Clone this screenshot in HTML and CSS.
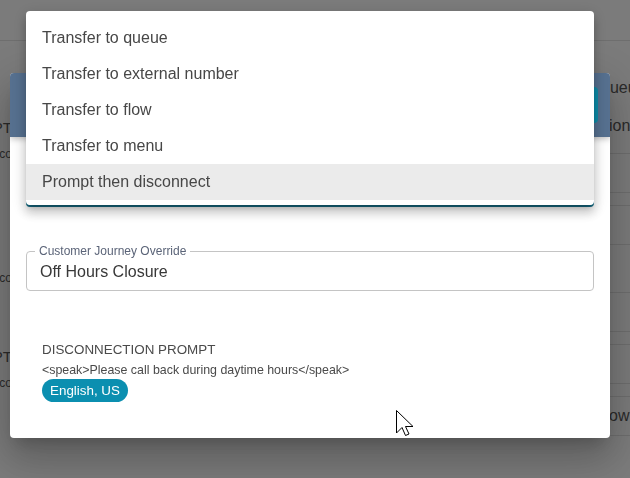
FILE: index.html
```html
<!DOCTYPE html>
<html>
<head>
	<meta charset="utf-8">
	<title>Disconnection settings</title>
	<link rel="stylesheet" href="styles.css">
</head>
<body>
	<div class="page">
		<div class="topbar"></div>
		<div class="content">
			<ul class="side">
				<li><div class="side-title">DISCONNECTION PROMPT</div><div class="side-sub">&lt;speak&gt;We are closed, please co</div></li>
				<li><div class="side-sub">Holiday closure in effect, co</div></li>
				<li><div class="side-title">DISCONNECTION PROMPT</div><div class="side-sub">&lt;speak&gt;Thanks for calling, co</div></li>
			</ul>
			<div class="main"></div>
			<ul class="table">
				<li class="row row-head"><div>queue</div><div>ition</div></li>
				<li class="row"></li>
				<li class="row row-gap"></li>
				<li class="row"></li>
				<li class="row row-wide"></li>
				<li class="row"></li>
				<li class="row row-gap"></li>
				<li class="row"></li>
				<li class="row row-gap"></li>
				<li class="row row-text">flow</li>
			</ul>
		</div>
	</div>

	<div class="backdrop"></div>

	<div class="dialog">
		<div class="dialog-head">
			<button class="head-action">Save</button>
		</div>
		<div class="dialog-body">
			<div class="select"></div>

			<fieldset class="field">
				<legend>Customer Journey Override</legend>
				<div class="field-value">Off Hours Closure</div>
			</fieldset>

			<div class="prompt">
				<div class="prompt-title">DISCONNECTION PROMPT</div>
				<div class="prompt-text">&lt;speak&gt;Please call back during daytime hours&lt;/speak&gt;</div>
				<span class="chip">English, US</span>
			</div>
		</div>
	</div>

	<ul class="menu">
		<li>Transfer to queue</li>
		<li>Transfer to external number</li>
		<li>Transfer to flow</li>
		<li>Transfer to menu</li>
		<li class="active">Prompt then disconnect</li>
	</ul>

	<svg class="pointer" width="20" height="30" viewBox="0 0 20 30">
		<path d="M1.5 1.5 V24 L7 18.5 L10.5 26.5 L14 25 L10.5 17.5 H18 Z" fill="#fff" stroke="#000" stroke-width="1" stroke-linejoin="miter"/>
	</svg>
</body>
</html>
```

FILE: styles.css
```css
html, body {
	margin: 0;
	height: 100%;
	overflow: hidden;
}

body {
	font-family: "Liberation Sans", Arial, sans-serif;
	background: #f6f6f6;
	color: #333;
}

/* page behind the dialog */
.page {
	height: 100%;
	display: flex;
	flex-direction: column;
}

.topbar {
	height: 40px;
	flex: none;
	border-bottom: 1px solid #dcdcdc;
}

.content {
	flex: 1;
	display: flex;
}

.side {
	width: 12px;
	margin: 0;
	padding: 74px 0 0;
	list-style: none;
	overflow: hidden;
	white-space: nowrap;
	color: #555;
}

.side li {
	display: flex;
	flex-direction: column;
	align-items: flex-end;
}

.side li:nth-child(2) { margin-top: 98px; }
.side li:nth-child(3) { margin-top: 53px; }

.side-title {
	font-size: 15px;
	line-height: 26px;
}

.side-sub {
	font-size: 12px;
	line-height: 26px;
}

.main {
	flex: 1;
}

.table {
	width: 29px;
	margin: 0;
	padding: 0;
	list-style: none;
	overflow: hidden;
	white-space: nowrap;
	font-size: 16px;
	color: #555;
}

.row {
	height: 38px;
	border-bottom: 1px solid #dcdcdc;
}

.row-head {
	height: 76px;
	padding: 28px 0 8px;
	line-height: 38px;
}

.row-gap { height: 12px; }
.row-wide { height: 47px; }
.row-text { line-height: 38px; }

.backdrop {
	position: fixed;
	inset: 0;
	background: rgba(0, 0, 0, 0.5);
}

/* dialog */
.dialog {
	position: fixed;
	left: 10px;
	top: 73px;
	width: 600px;
	height: 365px;
	display: flex;
	flex-direction: column;
	background: #fff;
	border-radius: 4px;
	overflow: hidden;
	box-shadow: 0 11px 15px -7px rgba(0, 0, 0, 0.2), 0 24px 38px 3px rgba(0, 0, 0, 0.14), 0 9px 46px 8px rgba(0, 0, 0, 0.12);
}

.dialog-head {
	height: 64px;
	flex: none;
	display: flex;
	align-items: center;
	justify-content: flex-end;
	padding: 0 12px;
	background: #56708f;
	box-shadow: 0 2px 6px rgba(0, 0, 0, 0.25);
	position: relative;
}

.head-action {
	width: 120px;
	height: 36px;
	border: 0;
	border-radius: 4px;
	background: #0c8ba8;
	color: #fff;
	font: 14px "Liberation Sans", Arial, sans-serif;
}

.dialog-body {
	padding: 14px 16px 0;
}

.select {
	height: 52px;
	border: 2px solid #16708a;
	border-radius: 4px;
}

.field {
	margin: 37px 0 0;
	padding: 0 13px 5px;
	min-width: 0;
	border: 1px solid #c4c4c4;
	border-radius: 4px;
}

.field legend {
	margin-left: -5px;
	padding: 0 4px;
	font-size: 12px;
	line-height: 14px;
	color: #5b6478;
}

.field-value {
	padding-top: 1px;
	font-size: 16px;
	line-height: 26px;
	color: #383838;
}

.prompt {
	padding: 49px 16px 0;
	display: flex;
	flex-direction: column;
	align-items: flex-start;
	color: #4a4a4a;
}

.prompt-title {
	font-size: 13.4px;
	line-height: 20px;
}

.prompt-text {
	margin-top: 2px;
	font-size: 12.4px;
	line-height: 16px;
}

.chip {
	margin-top: 1px;
	height: 23px;
	padding: 0 8px;
	border-radius: 12px;
	background: #0b8fb0;
	color: #fff;
	font-size: 13.4px;
	line-height: 23px;
}

/* open select menu */
.menu {
	position: fixed;
	left: 26px;
	top: 11px;
	width: 568px;
	margin: 0;
	padding: 9px 0 5px;
	list-style: none;
	background: #fff;
	border-radius: 4px;
	box-shadow: 0 5px 5px -3px rgba(0, 0, 0, 0.2), 0 8px 10px 1px rgba(0, 0, 0, 0.14), 0 3px 14px 2px rgba(0, 0, 0, 0.12);
}

.menu li {
	height: 36px;
	padding: 0 16px;
	font-size: 16px;
	line-height: 36px;
	color: #474747;
}

.menu li.active {
	background: #ebebeb;
}

.pointer {
	position: fixed;
	left: 395px;
	top: 409px;
}
```
